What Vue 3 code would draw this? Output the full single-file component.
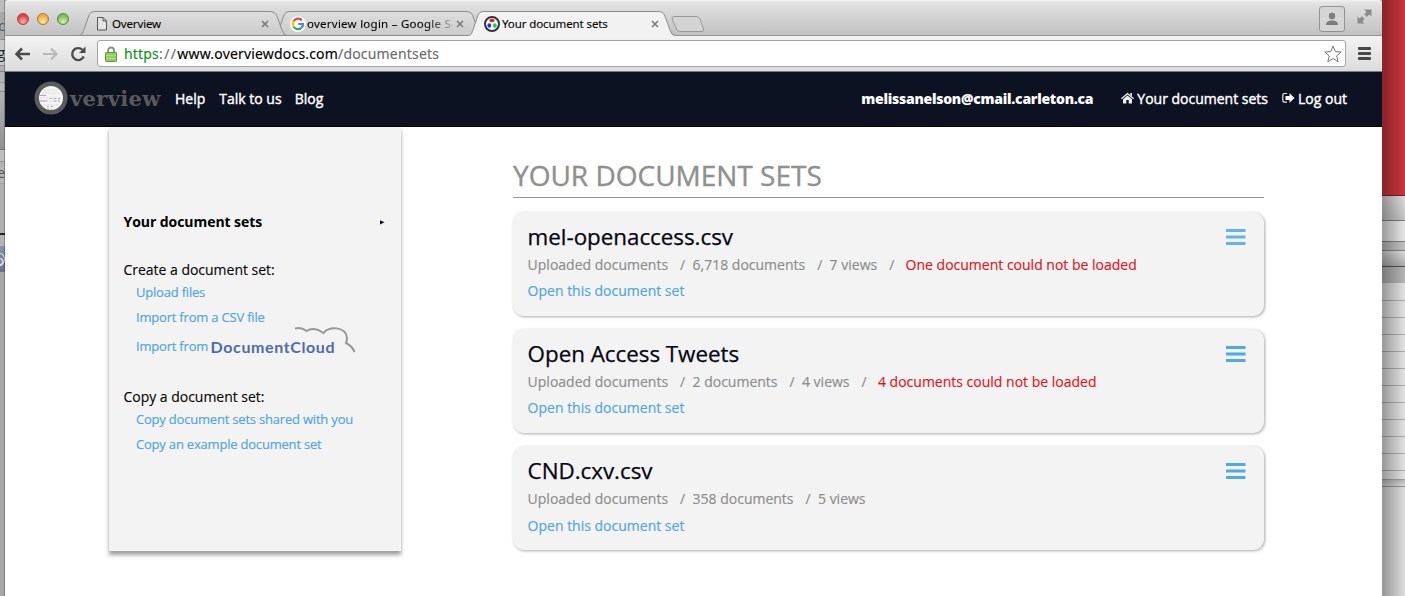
<script setup>
const leftRows = [
  { h: 12, c: '#bcbcbc' },
  { h: 28, c: '#a9a9a9', t: 'c', line: '#8c8c8c' },
  { h: 26, c: '#c9c9c9', t: 'g', dark: true, line: '#8f8f8f' },
  { h: 6, c: '#b0b0b0', line: '#838383' },
  { h: 11, c: '#b3b3b3', line: '#999' },
  { h: 9, c: '#b8b8b8', line: '#888' },
  { h: 58, c: 'linear-gradient(#b2b2b2, #929292)', line: '#777' },
  { h: 12, c: '#bdbdbd', line: '#999' },
  { h: 22, c: '#b4b4b4', t: 'ie', line: '#a2a2a2' },
  { h: 49, c: '#b0b0b0' },
  { h: 2, c: '#1d2a2a' },
  { h: 11, c: '#b4b4b4' },
  { h: 26, c: 'linear-gradient(#8793ad, #667392)', t: 'o', light: true },
  { h: 324, c: '#a7a7a7' },
]

const rightRows = [
  { h: 196, c: '#d3373f', line: '#7e2228' },
  { h: 25, c: 'linear-gradient(#e4e4e4, #cdcdcd)', line: '#818181' },
  { h: 21, c: '#f0f0f0', line: '#8a8a8a' },
  { h: 9, c: '#c9c9c9', line: '#8a8a8a' },
  { h: 16, c: 'linear-gradient(#e6e6e6, #b4b4b4)', line: '#555' },
  { h: 16, c: '#bcbcbc' },
  ...Array.from({ length: 11 }, (_, i) => ({ h: i ? 17 : 18, c: '#ececec', line: '#b4b4b4' })),
  { h: 9, c: '#ececec', line: '#a8a8a8' },
  { h: 7, c: 'linear-gradient(#c4c4c4, #e4e4e4)', line: '#9c9c9c' },
  { h: 109, c: '#e6e6e6' },
]

const sets = [
  { title: 'mel-openaccess.csv', docs: '6,718 documents', views: '7 views', error: 'One document could not be loaded', faded: true },
  { title: 'Open Access Tweets', docs: '2 documents', views: '4 views', error: '4 documents could not be loaded' },
  { title: 'CND.cxv.csv', docs: '358 documents', views: '5 views' },
]
</script>

<template>
  <div class="desktop">
    <div class="strip left">
      <div v-for="(r, i) in leftRows" :key="i" class="row" :style="{ height: r.h + 'px', background: r.c, borderBottomColor: r.line || 'transparent', borderBottomWidth: r.line ? '1px' : '0' }">
        <span v-if="r.t" :class="{ dark: r.dark, light: r.light }">{{ r.t }}</span>
      </div>
    </div>

    <div class="window">
      <header class="titlebar">
        <div class="lights">
          <i class="light red"></i><i class="light amber"></i><i class="light green"></i>
        </div>
        <div class="tabs">
          <div class="tab first">
            <svg class="shape" width="208" height="25" viewBox="0 0 208 25">
              <path d="M-.5 24.500C2 24 3 21 5 16L9 4Q10.500 .5 14 .5H191Q195 .5 196.500 4L202 19Q203.500 24.500 207 24.500Z" fill="url(#inactive)" stroke="#8d8d8d" />
              <defs>
                <linearGradient id="inactive" x1="0" y1="0" x2="0" y2="1"><stop stop-color="#dedede" /><stop offset="1" stop-color="#cbcbcb" /></linearGradient>
              </defs>
            </svg>
            <svg class="fav page" width="12" height="16" viewBox="0 0 12 16"><path d="M1.500 1.500H7L10.500 5V14H1.500ZM7 1.500V5H10.500" fill="#e4e4e4" stroke="#555" /></svg>
            <span class="label l1">Overview</span>
            <svg class="close" width="8" height="8" viewBox="0 0 8 8"><path d="M1 1 7 7M7 1 1 7" stroke="#777" stroke-width="1.500" /></svg>
          </div>
          <div class="tab second">
            <svg class="shape" width="208" height="25" viewBox="0 0 208 25">
              <path d="M.5 24.5C4 24 4 21 6 16L10 4Q11.500 .5 15 .5H193Q197 .5 198.500 4L204 19Q205 24.500 207 24.500Z" fill="url(#inactive)" stroke="#8d8d8d" />
            </svg>
            <svg class="fav" width="16" height="16" viewBox="0 0 16 16">
              <circle cx="8" cy="8" r="8" fill="#fff" />
              <g fill="none" stroke-width="2.200">
                <path d="M3.600 5.200A5 5 0 0 1 11.800 4.500" stroke="#e94335" />
                <path d="M3.600 5.200A5 5 0 0 0 3.600 10.700" stroke="#f9bc15" />
                <path d="M3.600 10.700A5 5 0 0 0 11.300 11.900" stroke="#34a853" />
                <path d="M11.300 11.900A5 5 0 0 0 13 8H8.200" stroke="#4285f4" />
              </g>
            </svg>
            <span class="label l2">overview login – Google Se</span>
            <svg class="close" width="8" height="8" viewBox="0 0 8 8"><path d="M1 1 7 7M7 1 1 7" stroke="#777" stroke-width="1.500" /></svg>
          </div>
          <div class="tab active">
            <svg class="shape" width="208" height="26" viewBox="0 0 208 26">
              <path d="M0 26L.5 24.500C4 24 4 21 6 16L10 4Q11.500 .5 15 .5H191Q195 .5 196.500 4L202 19Q203.500 24.500 207 24.500V26Z" fill="#f2f2f2" />
              <path d="M.5 24.500C4 24 4 21 6 16L10 4Q11.500 .5 15 .5H191Q195 .5 196.500 4L202 19Q203.500 24.500 207 24.500" fill="none" stroke="#8d8d8d" />
            </svg>
            <svg class="fav" width="16" height="16" viewBox="0 0 16 16">
              <circle cx="8" cy="8" r="7" fill="#fff" stroke="#30343a" stroke-width="2" />
              <ellipse cx="8" cy="4.500" rx="2.700" ry="1.800" fill="#f01820" />
              <ellipse cx="5.300" cy="9.500" rx="1.900" ry="2.200" fill="#1d35f5" />
              <ellipse cx="10.800" cy="9.500" rx="1.900" ry="2.200" fill="#19d24d" />
            </svg>
            <span class="label l3">Your document sets</span>
            <svg class="close" width="8" height="8" viewBox="0 0 8 8"><path d="M1 1 7 7M7 1 1 7" stroke="#777" stroke-width="1.500" /></svg>
          </div>
          <svg class="newtab" width="34" height="17" viewBox="0 0 34 17"><path d="M3 .5H25Q28 .5 29 3L32.500 13Q33 15.500 31 15.500H9Q6.500 15.500 5.500 13L1.200 3Q.5 .5 3 .5Z" fill="#d4d4d4" stroke="#999" /></svg>
        </div>
        <div class="profile">
          <svg width="14" height="14" viewBox="0 0 14 14" fill="#7d7d7d"><circle cx="7" cy="4" r="3.200" /><path d="M1 13C1 9.500 4 8.500 7 8.500S13 9.500 13 13Z" /></svg>
        </div>
        <svg class="expand" width="15" height="15" viewBox="0 0 15 15" fill="#8b8b8b"><path d="M7 .5H14.500V7.500L12.300 5.600 9.800 8 7.300 5.300 9.500 3ZM.5 7.500 2.700 9.500 5 7.300 7.600 9.900 5.400 12.200 7.500 14.500H.5Z" /></svg>
      </header>

      <div class="toolbar">
        <svg class="back" width="17" height="16" viewBox="0 0 17 16"><path d="M8 2.500 2.500 8 8 13.500M2.500 8H16" fill="none" stroke="#4b4b4b" stroke-width="2.500" /></svg>
        <svg class="fwd" width="17" height="16" viewBox="0 0 17 16"><path d="M9 2.500 14.500 8 9 13.500M14.500 8H1" fill="none" stroke="#b9b9b9" stroke-width="2.200" /></svg>
        <svg class="reload" width="17" height="16" viewBox="0 0 17 16"><path d="M13.700 10.500A6 6 0 1 1 12.300 3.700" fill="none" stroke="#4b4b4b" stroke-width="2.400" /><path d="M15.500 .5V7H9Z" fill="#4b4b4b" /></svg>
        <div class="omnibox">
          <svg width="12" height="16" viewBox="0 0 12 16"><path d="M3 8V4.500A3 3 0 0 1 9 4.500V8" fill="none" stroke="#8b8b8b" stroke-width="1.800" /><rect x=".5" y="6.500" width="11" height="9" rx=".8" fill="#8ed061" stroke="#5f8f4b" /><path d="M1 9.500H11M1 12.500H11" stroke="#a9de84" /></svg>
          <span class="url"><span class="https">https</span><span class="dim slashes">://</span>www.overviewdocs.com<span class="dim">/documentsets</span></span>
          <svg class="star" width="18" height="18" viewBox="0 0 18 18"><path d="M9 1 11.300 6.600 17.200 7 12.700 10.900 14.200 16.800 9 13.500 3.800 16.800 5.300 10.900 .8 7 6.700 6.600Z" fill="#fff" stroke="#777" stroke-linejoin="round" /></svg>
        </div>
        <div class="menu"><i></i><i></i><i></i></div>
      </div>

      <nav class="nav">
        <svg class="lens" width="34" height="34" viewBox="0 0 34 34">
          <circle cx="17" cy="17" r="14.300" fill="#f4f4f4" stroke="#5b5b5b" stroke-width="4.500" />
          <path d="M10 9H23M8 12H26M6 17H26M6 20H27M10 24H24" stroke="#d6d6d6" stroke-dasharray="2 1" />
          <path d="M5.500 14.500H12M5.500 20H13" stroke="#d98ade" />
          <path d="M16 17.500H27M20 20H27M13 25.500H19M13 28H18" stroke="#b0b0b0" stroke-dasharray="2 2" />
        </svg>
        <span class="brand">verview</span>
        <a class="n1">Help</a><a class="n2">Talk to us</a><a class="n3">Blog</a>
        <strong class="email">melissanelson@cmail.carleton.ca</strong>
        <a class="home"><svg width="13" height="12" viewBox="0 0 13 12" fill="#eee"><path d="M6.500 .8 13 6.300 12.200 7.200 6.500 2.500 .8 7.200 0 6.300ZM9.300 1H11V4.200L9.300 2.700ZM6.500 3.500 11 7.200V11.500H7.700V8H5.300V11.500H2V7.200Z" /></svg><span>Your document sets</span></a>
        <a class="out"><svg width="13" height="12" viewBox="0 0 13 12"><path d="M5 1.500H2.500Q.8 1.500 .8 3V8.500Q.8 10.200 2.500 10.200H5" fill="none" stroke="#eee" stroke-width="1.200" /><path d="M3.500 4H7.500V1.200L12.500 6 7.500 10.700V8H3.500Z" fill="#fff" /></svg><span>Log out</span></a>
      </nav>

      <main class="content">
        <aside class="side">
          <div class="current"><span>Your document sets</span><svg width="5" height="5" viewBox="0 0 5 5"><path d="M0 .3 4.500 2.300 0 4.500Z" fill="#0c1222" /></svg></div>
          <h3 class="h-create">Create a document set:</h3>
          <a class="s1">Upload files</a>
          <a class="s2">Import from a CSV file</a>
          <a class="s3"><span>Import from</span><b class="cloud">DocumentCloud<svg width="62" height="27" viewBox="0 0 62 27"><path d="M1 2.500Q7 .5 12.500 5Q20 0 29.500 7C34 0 52 0 53 12Q53 14.500 52 17Q58 20 60.500 26" fill="none" stroke="#999" stroke-width="2" /></svg></b></a>
          <h3 class="h-copy">Copy a document set:</h3>
          <a class="s4">Copy document sets shared with you</a>
          <a class="s5">Copy an example document set</a>
        </aside>
        <section class="list">
          <h1><span>YOUR DOCUMENT SETS</span></h1>
          <article v-for="(s, i) in sets" :key="i" class="card">
            <div>
              <h2>{{ s.title }}</h2>
              <p class="meta"><span>Uploaded documents</span><i>/</i><span>{{ s.docs }}</span><i>/</i><span>{{ s.views }}</span><template v-if="s.error"><i>/</i><span class="error">{{ s.error }}</span></template></p>
              <a class="open">Open this document set</a>
            </div>
            <svg class="burger" :class="{ faded: s.faded }" width="20" height="17" viewBox="0 0 20 17"><path d="M0 1.500H19.500M0 8H19.500M0 14.500H19.500" stroke="#4daae6" stroke-width="3" /></svg>
          </article>
        </section>
      </main>
    </div>

    <div class="strip right">
      <div v-for="(r, i) in rightRows" :key="i" class="row" :style="{ height: r.h + 'px', background: r.c, borderBottomColor: r.line || 'transparent', borderBottomWidth: r.line ? '1px' : '0' }"></div>
      <div class="shade"></div>
    </div>
  </div>
</template>

<style>
body { margin: 0; overflow: hidden; }
</style>

<style scoped>
* { box-sizing: border-box; }
.desktop { display: grid; grid-template-columns: 5px 1377px 23px; width: 1405px; height: 596px; overflow: hidden; font-family: "Open Sans", "Noto Sans", sans-serif; background: #a7a7a7; }
h1, h2, h3, p { margin: 0; font-weight: 400; }
svg { display: block; flex: none; }
.strip { position: relative; overflow: hidden; height: 596px; }
.row { border-bottom-style: solid; overflow: hidden; display: flex; align-items: center; justify-content: flex-end; font-size: 14px; line-height: 14px; color: #555; }
.left::after { content: ""; position: absolute; inset: 0 0 0 4px; background: rgba(0, 0, 0, .25); }
.row .dark { color: #222; }
.row .light { color: #dfe3ea; }
.shade { position: absolute; inset: 0; background: linear-gradient(90deg, rgba(0, 0, 0, .34), rgba(0, 0, 0, .04)); border-left: 1px solid rgba(0, 0, 0, .3); }
.window { background: #fff; height: 596px; overflow: hidden; border-radius: 4px 4px 0 0; }

.titlebar { height: 35px; display: flex; align-items: flex-start; background: linear-gradient(#f2f2f2 0, #e2e2e2 3px, #c1c1c1 35px); }
.lights { display: flex; gap: 8px; padding: 13px 0 0 12px; width: 75px; }
.light { width: 12px; height: 12px; border-radius: 50%; border: 1px solid; }
.red { background: radial-gradient(circle at 50% 75%, #ffb3ab, #e8484a 60%, #d42f35); border-color: #a24646; }
.amber { background: radial-gradient(circle at 50% 75%, #ffeaa0, #f3b14a 60%, #e49b32); border-color: #a8773a; }
.green { background: radial-gradient(circle at 50% 75%, #d6f5ae, #85c15b 60%, #6cab47); border-color: #5b8746; }
.tabs { display: flex; padding-top: 11px; }
.tab { position: relative; width: 208px; height: 25px; margin-right: -14px; display: flex; align-items: center; padding-left: 16px; }
.first { z-index: 2; }
.second { z-index: 1; }
.active { z-index: 3; margin-right: 0; }
.shape { position: absolute; left: 0; top: 0; overflow: visible; }
.fav { position: relative; }
.label { position: relative; font-size: 11.5px; line-height: 16px; color: #000; white-space: nowrap; font-family: "Noto Sans", sans-serif; overflow: hidden; -webkit-text-stroke: .1px; }
.l1 { margin-left: 4px; width: 149px; letter-spacing: -.15px; }
.l2 { margin-left: 1px; width: 145px; margin-right: 4px; letter-spacing: .25px; mask-image: linear-gradient(90deg, #000 118px, rgba(0, 0, 0, .2) 145px); }
.l3 { margin-left: 2px; width: 149px; letter-spacing: -.1px; }
.close { position: relative; }
.newtab { margin: 5px 0 0 -5px; }
.profile { margin: 6px -1px 0 auto; width: 26px; height: 26px; border: 1px solid #939393; border-radius: 3px; display: flex; align-items: center; justify-content: center; background: #d5d5d5; }
.expand { margin: 9px 10px 0 13px; }

.toolbar { height: 37px; display: flex; align-items: center; background: linear-gradient(#f3f3f3, #dcdcdc); border-top: 1px solid #959595; border-bottom: 1px solid #7a7a7a; padding-left: 9px; }
.fwd { margin-left: 11px; }
.reload { margin-left: 11px; }
.omnibox { margin-left: 10px; width: 1249px; height: 27px; border: 1px solid #a4a4a4; border-radius: 3px; background: #fff; display: flex; align-items: center; padding: 0 3px 0 7px; }
.url { margin-left: 7px; font-family: "Noto Sans", sans-serif; font-size: 14px; line-height: 20px; color: #000; letter-spacing: .18px; white-space: nowrap; -webkit-text-stroke: .15px; }
.slashes { letter-spacing: 1.400px; }
.https { color: #0d9318; }
.dim { color: #6c6c6c; }
.star { margin-left: auto; }
.menu { margin-left: 12px; display: grid; gap: 2px; }
.menu i { width: 13px; height: 3px; border-radius: 1px; background: #484848; }

.nav { height: 55px; background: #0c1222; border-bottom: 1px solid #000; display: flex; align-items: center; color: #fff; font-size: 14px; padding: 0 0 2px 29px; white-space: nowrap; font-weight: 500; }
.nav a { -webkit-text-stroke: .4px #fff; }
.brand { margin-left: 2px; width: 93px; font-family: "DejaVu Serif", serif; font-weight: 700; font-size: 21px; letter-spacing: .35px; color: #5a5a5a; }
.n1 { margin-left: 12px; }
.n2 { margin-left: 14px; }
.n3 { margin-left: 13px; }
.email { margin-left: auto; margin-right: 28px; font-weight: 800; letter-spacing: -.26px; }
.home, .out { display: flex; align-items: center; gap: 3px; }
.out { margin-left: 14px; margin-right: 35px; }

.content { display: flex; align-items: flex-start; }
.side { margin-left: 104px; width: 292px; height: 424px; background: #f3f3f3; padding: 85px 16px 0 14.500px; box-shadow: 0 4px 4px rgba(0, 0, 0, .38); display: flex; flex-direction: column; font-size: 14px; line-height: 20px; color: #000; white-space: nowrap; }
.current { display: flex; justify-content: space-between; align-items: center; font-weight: 700; margin-bottom: 28px; letter-spacing: -.06px; }
.side h3 { font-size: 14px; line-height: 20px; letter-spacing: -.02px; -webkit-text-stroke: .1px; }
.side a { font-size: 13px; line-height: 25px; color: #4fa5e1; padding-left: 12.500px; letter-spacing: -.2px; -webkit-text-stroke: .15px; }
.s3 { display: flex; align-items: center; height: 33px; }
.side .s3 { line-height: 33px; }
.cloud { position: relative; margin-left: 2.500px; font-family: Lato, sans-serif; font-size: 16px; font-weight: 700; letter-spacing: .6px; color: #4e6cac; line-height: 33px; -webkit-text-stroke: 0; }
.cloud svg { position: absolute; left: 83px; top: -4px; }
.h-copy { margin-top: 24px; }
.list { margin-left: 112px; width: 751px; padding-top: 27px; }
h1 { font-size: 28px; line-height: 42px; height: 44px; color: #909090; border-bottom: 1px solid #999; margin-bottom: 14px; -webkit-text-stroke: .4px; }
.card { width: 751px; height: 104px; margin-bottom: 13px; border-radius: 11px; background: #f3f3f3; box-shadow: 1px 1px 3px rgba(0, 0, 0, .33); padding: 10px 18px 0 14.600px; display: flex; justify-content: space-between; white-space: nowrap; }
h2 { font-size: 22.4px; line-height: 30px; height: 32px; color: #050510; letter-spacing: -.03px; -webkit-text-stroke: .25px; }
.meta { font-size: 14px; line-height: 22px; height: 24px; color: #8c8c8c; -webkit-text-stroke: .15px; }
.meta i { font-style: normal; margin: 0 7.300px 0 12px; }
.meta .error { color: #e3141b; margin-left: 4px; }
.open { display: block; font-size: 14px; line-height: 26px; color: #4fa5e1; -webkit-text-stroke: .15px; }
.card:last-child .open { padding-top: 1px; }
.burger { margin-top: 7px; }
.faded { opacity: .85; }
</style>
